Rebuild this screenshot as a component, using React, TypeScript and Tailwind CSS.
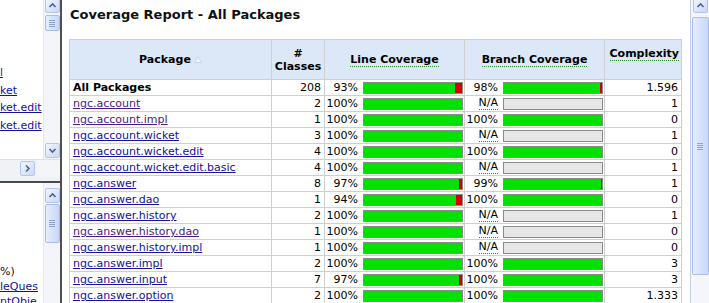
import React from 'react';

type Row = {
  name: string;
  classes: number;
  line: number;
  branch: number | null;
  cx: string;
  visited?: boolean;
};

const rows: Row[] = [
  { name: 'ngc.account', classes: 2, line: 100, branch: null, cx: '1', visited: true },
  { name: 'ngc.account.impl', classes: 1, line: 100, branch: 100, cx: '0', visited: true },
  { name: 'ngc.account.wicket', classes: 3, line: 100, branch: null, cx: '1' },
  { name: 'ngc.account.wicket.edit', classes: 4, line: 100, branch: 100, cx: '0' },
  { name: 'ngc.account.wicket.edit.basic', classes: 4, line: 100, branch: null, cx: '1' },
  { name: 'ngc.answer', classes: 8, line: 97, branch: 99, cx: '1' },
  { name: 'ngc.answer.dao', classes: 1, line: 94, branch: 100, cx: '0' },
  { name: 'ngc.answer.history', classes: 2, line: 100, branch: null, cx: '1' },
  { name: 'ngc.answer.history.dao', classes: 1, line: 100, branch: null, cx: '0', visited: true },
  { name: 'ngc.answer.history.impl', classes: 1, line: 100, branch: null, cx: '0' },
  { name: 'ngc.answer.impl', classes: 2, line: 100, branch: 100, cx: '3' },
  { name: 'ngc.answer.input', classes: 7, line: 97, branch: 100, cx: '3' },
  { name: 'ngc.answer.option', classes: 2, line: 100, branch: 100, cx: '1.333' },
];

const Arrow = ({ dir }: { dir: 'up' | 'down' | 'right' }) => {
  const d = dir === 'up' ? 'M1.5 6 L4.5 3 L7.5 6' : dir === 'down' ? 'M1.5 3 L4.5 6 L7.5 3' : 'M3 1.5 L6 4.5 L3 7.5';
  return (
    <svg width="9" height="9" viewBox="0 0 9 9">
      <path d={d} fill="none" stroke="#4d6185" strokeWidth="1.6" />
    </svg>
  );
};

const ScrollButton = ({ dir, className = '' }: { dir: 'up' | 'down' | 'right'; className?: string }) => (
  <div
    className={`flex items-center justify-center w-[15px] h-[15px] shrink-0 rounded-[2px] border border-[#b3c5ec] bg-gradient-to-br from-[#f2f6fe] to-[#c9d8f8] ${className}`}
  >
    <Arrow dir={dir} />
  </div>
);

const Grip = () => (
  <div className="flex flex-col gap-[1px]">
    <div className="w-[6px] h-[1px] bg-[#8ea2cc]" />
    <div className="w-[6px] h-[1px] bg-[#8ea2cc]" />
    <div className="w-[6px] h-[1px] bg-[#8ea2cc]" />
    <div className="w-[6px] h-[1px] bg-[#8ea2cc]" />
  </div>
);

const Thumb = ({ className = '' }: { className?: string }) => (
  <div
    className={`flex items-center justify-center shrink-0 rounded-[2px] border border-[#a9bde8] bg-gradient-to-r from-[#e6eefd] to-[#c7d7f8] ${className}`}
  >
    <Grip />
  </div>
);

const Bar = ({ pct }: { pct: number | null }) => {
  if (pct === null) {
    return <div className="w-[100px] h-[12px] border border-[#8a8a8a] bg-[#e6e6e6]" />;
  }
  const green = Math.round((pct / 100) * 98);
  return (
    <div className="flex w-[100px] h-[12px] border border-[#8a8a8a] bg-[#d40000]">
      <div className="h-full bg-[#00e100]" style={{ width: green }} />
    </div>
  );
};

const CoverageCell = ({ pct }: { pct: number | null }) => (
  <td className="border border-[#cfcfcf] p-0">
    <div className="flex items-center justify-end gap-[5px] pr-[1px]">
      {pct === null ? (
        <span className="border-b border-dotted border-[#2f8f2f] leading-[12px]">N/A</span>
      ) : (
        <span>{pct}%</span>
      )}
      <Bar pct={pct} />
    </div>
  </td>
);

export default function App() {
  return (
    <div className="flex w-[709px] h-[303px] overflow-hidden bg-white font-['DejaVu_Sans',Verdana,sans-serif] text-black">
      {/* left frames */}
      <div className="flex flex-col w-[60px] shrink-0 bg-[#eef2fa]">
        <div className="flex h-[159px] shrink-0 bg-white">
          <div className="flex-1 overflow-hidden pt-[64px] text-[11px] leading-[17.5px] whitespace-nowrap">
            <div className="text-[#4a1a80] underline">l</div>
            <div className="text-[#12129b] underline">ket</div>
            <div className="text-[#12129b] underline">ket.edit</div>
            <div className="text-[#12129b] underline">ket.edit</div>
          </div>
          <div className="flex flex-col items-center w-[17px] bg-[#f3f5fb] border-l border-[#e2e8f4]">
            <ScrollButton dir="up" className="-mt-[2px]" />
            <Thumb className="w-[15px] h-[16px] mt-[2px]" />
            <div className="flex-1" />
            <ScrollButton dir="down" className="mb-[1px]" />
          </div>
        </div>
        <div className="flex h-[18px] shrink-0 border-t border-[#d8dfee] bg-[#f3f4f7]">
          <div className="flex items-center w-[38px] bg-[#f1f2f6] pl-[20px]">
            <ScrollButton dir="right" />
          </div>
          <div className="flex-1 bg-[#f4f5f8]" />
        </div>
        <div className="h-[4px] shrink-0 bg-[#eef1f7]" />
        <div className="h-[2px] shrink-0 bg-[#4a4a4a]" />
        <div className="flex flex-1 min-h-0 overflow-hidden bg-white">
          <div className="flex-1 overflow-hidden pt-[81px] text-[11px] leading-[15px] whitespace-nowrap">
            <div className="text-[#111]">%)</div>
            <div className="text-[#12129b] underline">leQues</div>
            <div className="text-[#12129b] underline">ntObje</div>
          </div>
          <div className="flex flex-col items-center w-[17px] bg-[#f3f5fb] border-l border-[#e2e8f4] pt-[5px]">
            <ScrollButton dir="up" />
            <Thumb className="w-[15px] h-[39px] mt-[1px]" />
          </div>
        </div>
      </div>
      <div className="w-[2px] shrink-0 bg-[#505050]" />

      {/* main frame */}
      <div className="flex-1 overflow-hidden pl-[7px] pt-[6px]">
        <h1 className="pl-[1px] text-[13px] leading-[18px] font-bold text-[#111]">Coverage Report - All Packages</h1>
        <table className="mt-[15px] table-fixed border-collapse text-[11px] leading-[15px] w-[613px]">
          <colgroup>
            <col className="w-[202px]" />
            <col className="w-[53px]" />
            <col className="w-[140px]" />
            <col className="w-[140px]" />
            <col className="w-[77px]" />
          </colgroup>
          <thead>
            <tr className="h-[40px] bg-[#dce8f8]">
              <th className="border border-[#cfcfcf] font-bold">
                <span className="inline-flex items-center gap-[3px]">
                  Package
                  <svg width="8" height="7" viewBox="0 0 8 7">
                    <path d="M0.5 6.5 L4 0.8 L7.5 6.5 Z" fill="#f4f7fc" stroke="#c9d2e0" strokeWidth="1" />
                  </svg>
                </span>
              </th>
              <th className="border border-[#cfcfcf] font-bold leading-[13px]">
                #
                <br />
                Classes
              </th>
              <th className="border border-[#cfcfcf] font-bold">
                <span className="border-b border-dotted border-[#2f8f2f] leading-[13px] inline-block">Line Coverage</span>
              </th>
              <th className="border border-[#cfcfcf] font-bold">
                <span className="border-b border-dotted border-[#2f8f2f] leading-[13px] inline-block">Branch Coverage</span>
              </th>
              <th className="border border-[#cfcfcf] font-bold align-top pt-[6px] text-right pr-[2px]">
                <span className="border-b border-dotted border-[#2f8f2f] leading-[13px] inline-block">Complexity</span>
              </th>
            </tr>
          </thead>
          <tbody>
            <tr className="h-[16px]">
              <td className="border border-[#cfcfcf] px-[3px] py-0 font-bold">All Packages</td>
              <td className="border border-[#cfcfcf] pr-[3px] py-0 text-right">208</td>
              <CoverageCell pct={93} />
              <CoverageCell pct={98} />
              <td className="border border-[#cfcfcf] pr-[3px] py-0 text-right">1.596</td>
            </tr>
            {rows.map((r) => (
              <tr key={r.name} className="h-[16px]">
                <td className="border border-[#cfcfcf] px-[3px] py-0 whitespace-nowrap">
                  <a href="#" className={`underline ${r.visited ? 'text-[#4a1a80]' : 'text-[#12129b]'}`}>
                    {r.name}
                  </a>
                </td>
                <td className="border border-[#cfcfcf] pr-[3px] py-0 text-right">{r.classes}</td>
                <CoverageCell pct={r.line} />
                <CoverageCell pct={r.branch} />
                <td className="border border-[#cfcfcf] pr-[3px] py-0 text-right">{r.cx}</td>
              </tr>
            ))}
          </tbody>
        </table>
      </div>

      {/* right scrollbar */}
      <div className="flex flex-col items-center w-[19px] shrink-0 bg-[#f4f6fb] border-l border-[#c3d1ee]">
        <ScrollButton dir="up" className="-mt-[2px]" />
        <Thumb className="w-[17px] h-[258px] mt-[4px]" />
      </div>
    </div>
  );
}
